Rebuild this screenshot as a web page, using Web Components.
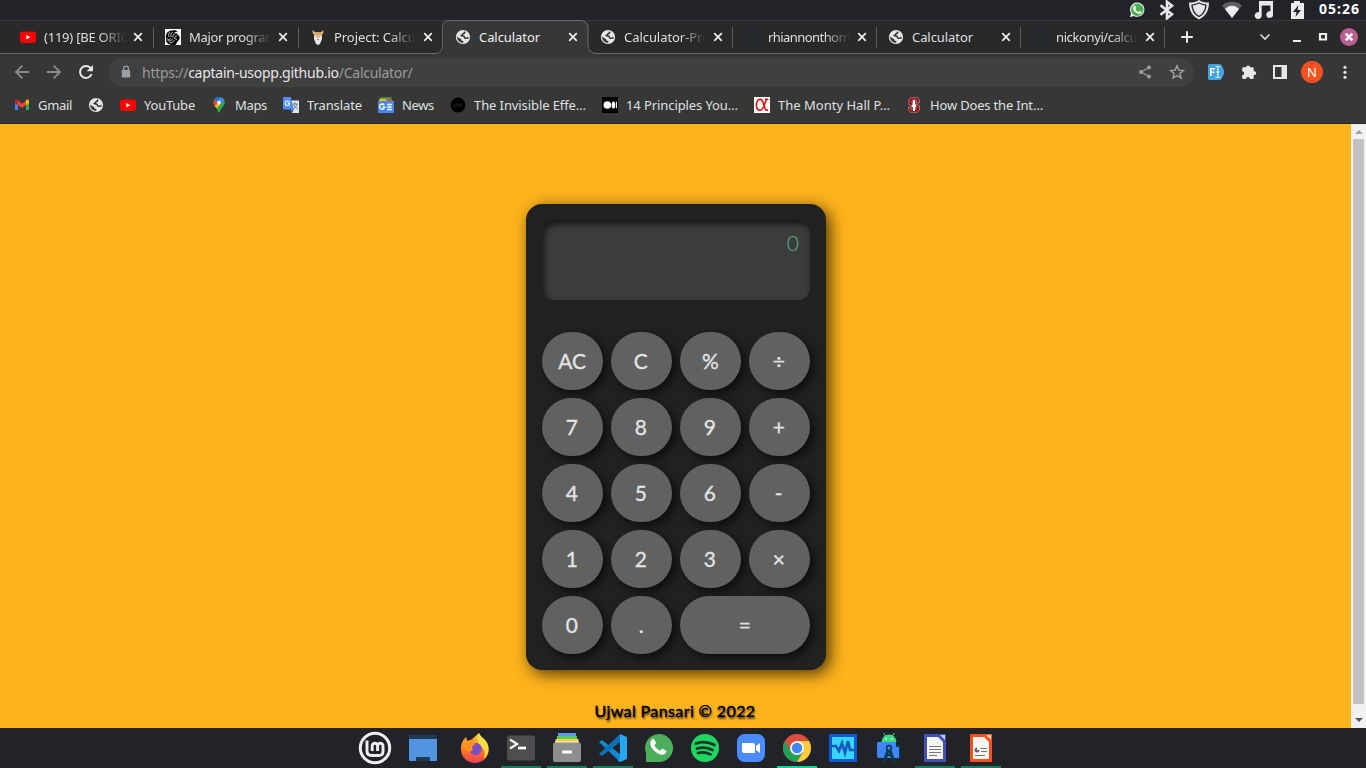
<!DOCTYPE html>
<html lang="en">
<head>
<meta charset="utf-8">
<title>Calculator</title>
<style>
html,body{margin:0;height:100%;overflow:hidden;background:#222329}
body{font-family:"Noto Sans","Open Sans",sans-serif}
</style>
</head>
<body>
<desk-top></desk-top>
<script>
const globe='<circle cx="8" cy="8" r="7.100" fill="#e4e5e7"/><path d="M9.800 2.600L9.600 4 8 4.600 7.600 6 5.900 6.600 9 7.300 9.900 9.200 12.800 9.100 13.300 8.200" stroke="#333" stroke-width="1.500" fill="none" stroke-linejoin="round"/><path d="M1.900 7.400L5.300 9.800 6.300 10.200 6.300 11.400 8.300 12V13.800C4.500 13.800 2.200 11 2.200 8.200z" fill="#333"/>';
const tube='<rect y="2.500" width="16" height="11.500" rx="3" fill="#f00"/><path fill="#fff" d="M6.300 5.900v4.600l4-2.300z"/>';
const octo='<path fill="#232c36" d="M8 .2a8 8 0 0 0-2.500 15.500c.4.100.5-.2.500-.4v-1.500c-2 .4-2.600-.6-2.800-1.100-.2-.4-.6-1-1-1.200-.3-.2-.7-.6 0-.6s1.100.6 1.300.8c.7 1.200 1.900.9 2.400.7.1-.5.300-.9.500-1.100-1.800-.2-3.600-.9-3.600-3.900 0-.9.300-1.600.8-2.100-.1-.3-.4-1.100.1-2.200 0 0 .7-.2 2.200.8a7.500 7.500 0 0 1 4 0c1.500-1 2.200-.8 2.200-.8.500 1.100.2 1.900.1 2.200.5.500.8 1.200.8 2.100 0 3-1.900 3.700-3.600 3.900.3.200.5.700.5 1.400v2.600c0 .2.200.5.600.4A8 8 0 0 0 8 .2Z"/>';
const phone='M6.300 5.100c.5-.4 1-.3 1.300.3l.7 1.500c.2.500-.5 1.200-.8 1.500.7 1.400 1.700 2.300 3.200 2.900.4-.4.900-1.100 1.300-1l1.700.9c.5.300.3 1.300-.4 1.800-1.200.9-3.100.5-5.400-1.300-2.500-2-3.500-5.100-1.600-6.600Z';
const ICONS={
globe:[16,globe],tube:[16,tube],octo:[16,octo],
ucf:[16,'<path fill="#fff" d="M0 0h16v16H0z"/><path d="M1 9C0 4 4 1 8 1.500c2-.5 4 0 5 1.500-2-.5-3 0-4 .5 2 0 3 1 4 2.500 2 1 2 3 1 5l-2 2-1 2.500c-2 1-5 1-6 0-2 0-3-2-4-3.500z"/><path stroke="#fff" stroke-width=".8" fill="none" d="M1.500 9c1 2 3 2 4.500 0M2.500 11.500c2 1 4 .5 5-1.500m-3 4c2 0 4-1 5-3M5 3C3.500 4.500 3.500 6 4 8m4-5C6 4 5.500 6 6 8m4.500-3.500C8.500 5 7.500 6.500 8 8.500m4-1.500c-2 0-2.500 1-2.500 2.500l2.500 1"/>'],
odin:[16,'<path d="M4 5h8v5l-2 5-2 1-2-1-2-5z" fill="#e8e5e2"/><path d="M4 7C4 3 6 3 8 3s4 0 4 4l-2-1H6z" fill="#d9a25c"/><path d="M4.500 6C2.500 5 2 3 3 .5c0 2 2 2 3 3zM11.500 6c2-1 2.500-3 1.500-5.500 0 2-2 2-3 3z" fill="#e9b06a"/><path d="M5.500 6.500h5L9.500 8.500h-3z" fill="#d8a48a"/><path d="M7 10.500h2" stroke="#999"/>'],
close:[16,'<path d="M4.200 4.200l7.600 7.600m0-7.600l-7.600 7.600" stroke="#eceded" stroke-width="1.700"/>'],
plus:[16,'<path d="M8 2.200v11.600M2.200 8h11.600" stroke="#eee" stroke-width="1.900"/>'],
chev:[16,'<path d="M3.500 5.500L8 10l4.500-4.500" stroke="#ddd" stroke-width="1.600" fill="none"/>'],
min:[16,'<path d="M4 11h8" stroke="#eee" stroke-width="2"/>'],
max:[16,'<path d="M5 5h6v5.500H5z" stroke="#eee" stroke-width="2.200" fill="none"/>'],
x:[20,'<circle cx="10" cy="10" r="9" fill="#bb5f92"/><path d="M6.700 6.700l6.600 6.600m0-6.600l-6.600 6.600" stroke="#fff" stroke-width="2.500"/>'],
back:[16,'<path d="M15 8H2m6.400-6.400L2 8l6.400 6.400" stroke="#8a8b8d" stroke-width="1.800" fill="none"/>'],
fwd:[16,'<path d="M1 8h13M7.600 1.600L14 8l-6.400 6.400" stroke="#8a8b8d" stroke-width="1.800" fill="none"/>'],
reload:[16,'<path d="M13.600 10.200A6 6 0 1 1 12.600 4" stroke="#e4e5e7" stroke-width="2" fill="none"/><path d="M15 .9v6.300H8.700z" fill="#e4e5e7"/>'],
lock:[16,'<rect x="3.800" y="6" width="8.400" height="7.600" rx="1" fill="#9aa0a6"/><path d="M5.600 7V4.600a2.400 2.400 0 0 1 4.800 0V7" stroke="#9aa0a6" stroke-width="1.300" fill="none"/>'],
share:[16,'<g fill="#9c9c9c"><circle cx="12" cy="3.500" r="2"/><circle cx="4" cy="8" r="2.100"/><circle cx="12" cy="12.500" r="2"/></g><path d="M12 3.500L4 8l8 4.500" stroke="#9c9c9c" stroke-width="1.300" fill="none"/>'],
star:[16,'<path d="M8 1.900l1.800 4.200 4.600.4-3.500 3 1.100 4.500-4-2.400L4 14l1.100-4.500-3.500-3 4.600-.4z" stroke="#a2a3a5" stroke-width="1.400" fill="none"/>'],
fi:[16,'<path d="M0 1.500Q0 0 1.500 0H11q2 0 2.700 1.500L16 6.500v3l-2.300 5Q13 16 11 16H1.500Q0 16 0 14.500z" fill="#41a4e0"/><path d="M2.800 12v-7.200h4.200M2.800 8.300h3.800" stroke="#fff" stroke-width="1.600" fill="none"/><path d="M7.500 2.600h1.400l1 .8v9.200l-1 .8H7.500M12.300 2.600h-1.400l-1 .8m0 9.200l1 .8h1.400M8.300 8h3" stroke="#fff" stroke-width="1" fill="none"/>'],
puzzle:[16,'<path fill="#e6e7e8" d="M5.200 3.300a1.900 1.900 0 0 1 3.800 0h2.500q1.200 0 1.200 1.200V7.200h.7a1.850 1.850 0 0 1 0 3.700h-.7v2.800q0 1.200-1.200 1.200H9a2 2 0 0 0-4 0H2.400q-1.200 0-1.200-1.200v-2.500a2 2 0 0 0 0-4V4.500q0-1.200 1.200-1.200z"/>'],
side:[16,'<path fill="#e6e7e8" fill-rule="evenodd" d="M1 1h14v14H1zM3 3v10h6.500V3z"/>'],
dots:[16,'<g fill="#e2e3e5"><circle cx="8" cy="3.300" r="1.600"/><circle cx="8" cy="8.300" r="1.600"/><circle cx="8" cy="13.300" r="1.600"/></g>'],
gmail:[16,'<path fill="#4285f4" d="M1 4v9h3V7z"/><path fill="#34a853" d="M12 7v6h3V4z"/><path fill="#ea4335" d="M4 3.500l4 3.300 4-3.300v4.600l-4 3-4-3z"/><path fill="#c5221f" d="M1 4.300C1 2.600 3 2 4 3.200V8.200L1 6z"/><path fill="#fbbc04" d="M15 4.300C15 2.600 13 2 12 3.200V8.200L15 6z"/>'],
maps:[16,'<clipPath id="m"><path d="M8 0a5.500 5.500 0 0 0-5.500 5.500c0 4 4 5 4.700 9.300.2 1 1.400 1 1.600 0 .7-4.300 4.700-5.300 4.700-9.300A5.500 5.500 0 0 0 8 0Z"/></clipPath><g clip-path="url(#m)"><path fill="#34a853" d="M0 0h16v16H0z"/><path fill="#fbbc04" d="M1 11L10 1l5-1-9 11-3 3z"/><path fill="#4285f4" d="M6 5l5-6 6 4-8 4z"/><path fill="#1a73e8" d="M3 3l3-3h4L6 5z"/><path fill="#ea4335" d="M0 3h4l3 3-4 4-3-1z"/><path fill="#34a853" d="M14 3v7l-5 6H6V12z"/></g><circle cx="8" cy="5.500" r="2" fill="#e9edf4"/>'],
translate:[16,'<path fill="#e4e5e7" d="M6 3.500h10V16H9z"/><path fill="#4f8df7" d="M1 0h6.800L11 12.500H1q-1 0-1-1V1q0-1 1-1z"/><path fill="#2f62c8" d="M7 12.500h4L9 16z"/><path d="M6.400 5A2.300 2.300 0 1 0 6.500 7.300V6.400H4.700" stroke="#fff" fill="none" stroke-width="1.100"/><path d="M9.800 7h5M12 5.500V7m2 0c-.5 2.500-1.700 3.800-3.500 5m.3-4.500c.6 1.800 2 3.500 3.700 4.500" stroke="#6b7b88" fill="none"/>'],
news:[16,'<path fill="#34a853" d="M2.500.3h11V3h-11z"/><path fill="#ea4335" d="M7 1.700l7.500 1V5H7z"/><path fill="#fbbc04" d="M1.200 1.700l6 .3L10 5H1.200z"/><path fill="#4688f4" d="M0 4h16V15q0 1-1 1H1q-1 0-1-1z"/><path d="M6.300 8A2.600 2.600 0 1 0 6.800 10H4.500M9 7.500h5M9 10h4.500M9 12.500h5" stroke="#fff" stroke-width="1.300" fill="none"/>'],
dark:[16,'<circle cx="8" cy="8" r="7.400" fill="#000"/><path d="M3 10h3V6.500m2 3.500V6.500l1.500 2 1.500-2V10" fill="none" stroke="#2e2e2e" stroke-width=".8"/>'],
medium:[16,'<path d="M0 0h16v16H0z"/><circle cx="5.300" cy="8" r="3.800" fill="#fff"/><ellipse cx="11.400" cy="8" rx="1.800" ry="3.600" fill="#fff"/><path d="M14.400 4.800v6.400" stroke="#fff" stroke-width="1.100"/>'],
alpha:[16,'<path fill="#fff" d="M0 0h16v16H0z"/><path d="M12.800 2.200c-1.500 2-2.500 9.300-6.200 11-2.700.8-4.200-1.700-4.200-5 0-3.500 1.500-6 4-5.800 3.800.3 3.600 10.500 6 10.900.8 0 1.300-.3 1.600-.8M10.800 2.300h3.600" fill="none" stroke="#e01010" stroke-width="1.600"/>'],
stan:[16,'<path d="M4.500.7h7L13.500 3v3h-3V3.500H6V6l7.500 2.500V13l-2 2.300H4.500l-2-2.300v-3h2.500v2.500h5V10L2.800 7.500V3z" fill="#a00f15" stroke="#c28d8d" stroke-width=".7"/><path d="M8 1.800l1.400 4.200-.3.500 1.600 3.500H9V14H7v-4H5.300L6.900 6.500 6.600 6z" fill="#fff"/>'],
twa:[16,'<path d="M1 15.200l1-3.900A7.200 7.200 0 1 1 4.800 14z" fill="#f0f0f0"/><circle cx="8.200" cy="7.800" r="6.200" fill="#4caf50"/><path transform="translate(-1.300 -1.400)" fill="#fff" d="'+phone+'"/>'],
bt:[20,'<path d="M3.500 5.200l11.500 9L10 18.200V1.800l5 4-11.500 9" stroke="#e8e8e8" stroke-width="2.600" fill="none"/>'],
shield:[20,'<path d="M10 0c3 2 6 2.700 10 2.600-.2 8-3 13.500-10 17C3 16.100.2 10.600 0 2.600 4 2.700 7 2 10 0Z" fill="#e5e5e5"/><path d="M10 2.200c2.600 1.400 5 2 7.700 2.200-.4 6-2.900 10.200-7.700 12.900-4.800-2.700-7.300-6.900-7.700-12.900C5 4.200 7.400 3.600 10 2.200Z" fill="#24252b"/><path d="M10 3.600c2.100 1.200 4.200 1.700 6.300 1.900-.5 4.800-2.500 8-6.300 10.300C6.200 13.500 4.200 10.300 3.700 5.500 5.800 5.300 7.900 4.800 10 3.600Z" fill="#e5e5e5"/>'],
wifi:[20,'<path d="M10 18L0 5.500C6 .6 14 .6 20 5.500z" fill="#606167"/><path d="M10 18L3 9c4-4.500 10-4.500 14 0z" fill="#eee"/>'],
music:[20,'<path fill="#e8e8e8" d="M5 1h14v13.500a3.300 3.300 0 1 1-2.600-3.200V5.500H7.700V15.500A3.500 3.500 0 1 1 5 12.200z"/>'],
bat:[20,'<path d="M7 1h6v2h4v16H4V3h3z" fill="#ececec"/><path d="M11.500 5L6 12h3.500L8.500 17l5.500-7h-3.500z" fill="#222329"/>'],
mint:[34,'<circle cx="17" cy="17" r="14.700" fill="none" stroke="#eeeff0" stroke-width="3"/><path d="M9 9.500V20q0 4.500 4.500 4.500h7.500q4 0 4-4V15a2.700 2.700 0 0 0-5.400 0v5M19.600 20v-5a2.700 2.700 0 0 0-5.400 0v5" fill="none" stroke="#eeeff0" stroke-width="2.900"/>'],
desk:[28,'<rect y="1" width="28" height="26" rx="1" fill="#5294e2"/><path d="M0 5V2q0-1 1-1h26q1 0 1 1v3zM7 27v-3q0-1 1-1h12q1 0 1 1v3z" fill="#1e3954"/>'],
fox:[30,'<defs><linearGradient id="f" x2="0" y2="1"><stop stop-color="#ffd43b"/><stop offset=".55" stop-color="#ff7a22"/><stop offset="1" stop-color="#ef3f55"/></linearGradient></defs><path d="M1 17C.6 11 3 7 6 4l1 4 4-1L19 0c1 3 3 4 5 6 4 4 5 8 4.700 12C28 25 22 30 15 30S1.500 25 1 17Z" fill="url(#f)"/><path d="M6 4l1 4 4-1 3-2v3H3.500z" fill="#ff8a20"/><path d="M19 0c1 3 3 4 5 6 7 7 5 15 0 20 2-8-1-11-4-14-3-4-3-8-1-12Z" fill="#ffdd45"/><path d="M11 7V3.500L8.500 6z" fill="#222329"/><circle cx="15.500" cy="16" r="6.200" fill="#7a4fc4"/><path d="M3 9l7 .5 2-2c0 2 3 2.700 4 3.500-3 1-4 2-4 4 2 1 0 3-2.500 4C5 17 3 13 3 9Z" fill="#ff9020"/>'],
term:[28,'<rect y="1.500" width="28" height="25" rx="2" fill="#4e4e4e"/><path d="M3 5l7 4.500L3 14" transform="translate(0 .5)" fill="none" stroke="#eee" stroke-width="2.400"/><path d="M11 14h8" stroke="#fff" stroke-width="2.700"/>'],
files:[30,'<path fill="#5d9de4" d="M6 0h18v4H6z"/><path fill="#54cb58" d="M5 3h20v4H5z"/><path fill="#ffcf48" d="M3.500 6h23v4h-23z"/><path fill="#f6f0d8" d="M3 8.500h24v2H3z"/><rect y="9.500" x="1" width="28" height="19.500" rx="2" fill="#8e8e8e"/><rect x="10" y="17.500" width="10" height="3" rx="1" fill="#fff"/>'],
code:[30,'<path d="M1 9l3-2 18 14v8z" fill="#1488cf"/><path d="M1 21l3 2L22 9V1z" fill="#0d71b5"/><path d="M22 1l7 3v22l-7 3-2-1.500 2-2V5z" fill="#24a8f2"/>'],
wa:[30,'<path d="M2 29V20A14 14 0 1 1 15 29z" fill="#4cae5b"/><path transform="translate(-3.500 -3.200) scale(1.850)" fill="#fff" d="'+phone+'"/>'],
spot:[30,'<circle cx="15" cy="15" r="14" fill="#1ed760"/><path d="M6 10.500c6-2 13-1.500 18.500 1.500M7 15.500c5-1.500 11-1 15.500 1.500M8 20c4-1 8.500-.8 12.500 1.400" stroke="#20352a" stroke-width="2.700" stroke-linecap="round" fill="none"/>'],
zoom:[30,'<rect x="1" y="1" width="28" height="28" rx="7.500" fill="#4a8cff"/><path fill="#fff" d="M6 10h11q2 0 2 2v8H8q-2 0-2-2zM20 13l4-3v10l-4-3z"/>'],
chrome:[30,'<circle cx="15" cy="15" r="14" fill="#df4c40"/><path d="M2.900 8A14 14 0 0 0 15 29L21 18.500 9 18z" fill="#21a05a"/><path d="M15 29A14 14 0 0 0 27.100 8H15l6 11z" fill="#fccb3e"/><circle cx="15" cy="15" r="7" fill="#f4f5f6"/><circle cx="15" cy="15" r="5.200" fill="#4285f4"/>'],
wave:[28,'<rect width="28" height="28" rx="1" fill="#1259d5"/><path fill="#34d6ff" d="M3 3h22v22H3z"/><path d="M3 12h4l3 5 3-8 3 10 3-12 2 9h4" fill="none" stroke="#1459b8" stroke-width="2.600"/>'],
droid:[30,'<path d="M7.500 9a7.500 7.500 0 0 1 15 0z" fill="#3ddb84"/><path d="M9.500 0l2 3m9-3l-2 3" stroke="#3ddb84"/><circle cx="12" cy="6" r=".8" fill="#fff"/><circle cx="18" cy="6" r=".8" fill="#fff"/><path d="M22 12h4.500v14H20z" fill="#073b50"/><path d="M4 9h18v5h3v11H5q-2 0-2-2V10q0-1 1-1z" fill="#4285f4"/><path d="M14.500 16L10 29m5.500-13L20 29" stroke="#073b50" stroke-width="3"/><circle cx="15" cy="15" r="2.400" fill="#4285f4" stroke="#073b50" stroke-width="1.500"/><path d="M12 23q3-2 6 0" stroke="#073b50" stroke-width="2" fill="none"/>'],
writer:[28,'<path d="M4.500 1.500h19v25h-19z" fill="#f5f5f5" stroke="#3f51b5" stroke-width="3"/><path d="M14 0h11v11z" fill="#3f51b5"/><path d="M19 1l5 5V1z" fill="#c5cae9"/><path d="M8 12.500h12M8 15.500h12M8 18.500h12M8 21.500h8" stroke="#777"/>'],
impress:[28,'<path d="M4.500 1.500h19v25h-19z" fill="#f5f5f5" stroke="#f4511e" stroke-width="3"/><path d="M14 0h11v11z" fill="#f4511e"/><path d="M19 1l5 5V1z" fill="#ffccbc"/><path d="M13.500 14.500H20M14 17.500h6M8 21.500h10" stroke="#777"/><path d="M10 13.500v2.500h2.500a2.500 2.500 0 1 1-2.500-2.500z" fill="#666"/>'],
up:[16,'<path d="M4 10l4-4 4 4z" fill="#a2a2a2"/>'],
down:[16,'<path d="M4 6l4 4 4-4z" fill="#555"/>']
};

class UiIcon extends HTMLElement{
  connectedCallback(){
    const [v,body]=ICONS[this.getAttribute('name')];
    const s=this.getAttribute('size')||v;
    this.attachShadow({mode:'open'}).innerHTML=`<style>:host{display:block;flex:none;width:${s}px;height:${s}px}svg{display:block}</style><svg width="${s}" height="${s}" viewBox="0 0 ${v} ${v}">${body}</svg>`;
  }
}
customElements.define('ui-icon',UiIcon);

/* A label whose tracking is adjusted so that it fills a given width. */
class FitText extends HTMLElement{
  connectedCallback(){
    this.attachShadow({mode:'open'}).innerHTML='<style>:host{display:inline-block;white-space:pre;flex:none}span{display:inline-block}</style><span><slot></slot></span>';
    const w=+this.getAttribute('w'),span=this.shadowRoot.querySelector('span');
    if(!w)return;
    const n=[...this.textContent].length;
    span.style.letterSpacing=((w-span.getBoundingClientRect().width)/n)+'px';
    this.style.width=w+'px';
  }
}
customElements.define('fit-text',FitText);

function define(name,html){
  customElements.define(name,class extends HTMLElement{
    connectedCallback(){
      if(this.shadowRoot)return;
      const t=document.createElement('template');
      t.innerHTML=typeof html==='function'?html(this):html;
      this.attachShadow({mode:'open'}).append(t.content.cloneNode(true));
    }
  });
}

define('system-panel',`<style>
:host{display:flex;height:20px;box-sizing:border-box;background:#222329;align-items:center;justify-content:flex-end;padding-right:6px;color:#fff}
.tray{display:grid;grid-template-columns:16px 20px 20px 20px 20px 20px;column-gap:13px;align-items:center;margin-right:12px}
.tray>:first-child{margin-left:3px;margin-right:-3px}
.tray>:nth-child(2){margin-left:2px;margin-right:-2px}
.tray>:nth-child(3),.tray>:nth-child(4){margin-left:1px;margin-right:-1px}
b{font:bold 14px/18px "Noto Sans",sans-serif;height:20px;display:block}
</style><div class="tray"><ui-icon name="twa"></ui-icon><ui-icon name="bt"></ui-icon><ui-icon name="shield"></ui-icon><ui-icon name="wifi"></ui-icon><ui-icon name="music"></ui-icon><ui-icon name="bat"></ui-icon></div><b><fit-text w="41">05:26</fit-text></b>`);

define('browser-tab',el=>{
 const a=el.hasAttribute('active');
 return `<style>
:host{display:flex;flex:none;width:${el.getAttribute('width')}px;height:34px;box-sizing:border-box;padding-left:12px;align-items:center;position:relative;color:#dedfe1;font-size:13px}
.t{width:84px;margin-left:8px;overflow:hidden;white-space:nowrap;height:20px;line-height:20px;-webkit-mask-image:linear-gradient(90deg,#000 56px,transparent 82px)}
.t.full{-webkit-mask-image:none}
ui-icon{position:relative}
.sep{position:absolute;right:-1px;top:7px;width:1px;height:21px;background:#5d5d5d}
.bg{position:absolute;left:-8px;top:0}
.x{margin-left:2px}
</style>${a?'<svg class="bg" width="162" height="34"><path d="M0 34V33.500Q8.500 33.500 8.500 25V8Q8.500.5 16 .5H146Q153.500.5 153.500 8V25Q153.500 33.500 162 33.500V34Z" fill="#373737"/><path d="M0 33.500Q7.500 33.500 7.500 25V8Q7.500.5 15 .5H145Q152.500.5 153 8V25Q153.500 33.500 162 33.500" fill="none" stroke="#6a6a6a"/></svg>':''}
<ui-icon name="${el.getAttribute('icon')}"></ui-icon><div class="t ${el.hasAttribute('full')?'full':''}" style="${a?'position:relative;color:#f0f0f0':''}"><slot></slot></div><ui-icon class="x" name="close"></ui-icon>${el.hasAttribute('sep')?'<i class="sep"></i>':''}`});

define('tab-strip',`<style>
:host{display:flex;height:34px;padding-left:8px;background:#292929;box-sizing:border-box;background-image:linear-gradient(#393939,#393939),linear-gradient(#6a6a6a,#6a6a6a);background-size:100% 1px;background-position:0 0,0 100%;background-repeat:no-repeat}
.win{display:flex;align-items:center;height:34px}
</style>
<browser-tab width="145" icon="tube" sep><fit-text w="90">(119) [BE ORIGI</fit-text></browser-tab><browser-tab width="145" icon="ucf" sep><fit-text w="88">Major program</fit-text></browser-tab><browser-tab width="145" icon="odin"><fit-text w="85">Project: Calcul</fit-text></browser-tab><browser-tab width="145" icon="globe" active full><fit-text w="61">Calculator</fit-text></browser-tab><browser-tab width="144" icon="globe" sep><fit-text w="86">Calculator-Pro</fit-text></browser-tab><browser-tab width="144" icon="octo" sep><fit-text w="82">rhiannonthom</fit-text></browser-tab><browser-tab width="144" icon="globe" sep full><fit-text w="61">Calculator</fit-text></browser-tab><browser-tab width="144" icon="octo" sep><fit-text w="84">nickonyi/calcul</fit-text></browser-tab>
<div class="win"><ui-icon name="plus" style="margin-left:15px"></ui-icon><ui-icon name="chev" style="margin-left:62px"></ui-icon><ui-icon name="min" style="margin-left:16px;margin-top:2px"></ui-icon><ui-icon name="max" style="margin-left:10px"></ui-icon><ui-icon name="x" style="margin-left:8px"></ui-icon></div>`);

define('tool-bar',`<style>
:host{display:flex;height:33px;background:#373737;align-items:center;padding:4px 13px 0 14px;box-sizing:border-box}
:host>*{flex:none}
.nav{display:flex;gap:16px;width:94px;padding-bottom:1px}
.url{box-sizing:border-box;display:flex;align-items:center;width:1086px;height:29px;border-radius:15px;background:#404040;padding:0 9px 1px 10px;color:#9b9b9b;font:14px/27px "Noto Sans",sans-serif}
.url b{font-weight:400;color:#e6e6e6}
.ext{display:flex;align-items:center;padding-bottom:1px}
.grow{flex:1}
.av{width:22px;height:22px;border-radius:50%;background:#f4511e;color:#fff;font:13px/22px "Noto Sans",sans-serif;text-align:center;flex:none}
</style><div class="nav"><ui-icon name="back"></ui-icon><ui-icon name="fwd"></ui-icon><ui-icon name="reload"></ui-icon></div>
<div class="url"><ui-icon name="lock"></ui-icon><fit-text w="270.500" style="margin-left:8px">https://<b>captain-usopp.github.io</b>/Calculator/</fit-text><span class="grow"></span><ui-icon name="share"></ui-icon><ui-icon name="star" style="margin-left:16px"></ui-icon></div>
<div class="ext"><ui-icon name="fi" style="margin-left:14px"></ui-icon><ui-icon name="puzzle" style="margin-left:17px"></ui-icon><ui-icon name="side" style="margin-left:15px"></ui-icon><div class="av" style="margin-left:13px">N</div><ui-icon name="dots" style="margin-left:14px"></ui-icon></div>`);

const marks=[['gmail','Gmail',34],['globe'],['tube','YouTube',51],['maps','Maps',32],['translate','Translate',55],['news','News',32],['dark','The Invisible Effe…',112],['medium','14 Principles You…',112],['alpha','The Monty Hall P…',112],['stan','How Does the Int…',113]];
define('bookmark-bar',`<style>
:host{display:flex;height:37px;background:#373737;border-bottom:1px solid #2a2a2a;box-sizing:border-box;padding-left:14px;gap:16px;color:#dfe0e2;font-size:13px;line-height:20px}
div{display:flex;height:36px;align-items:center;gap:8px}
</style>${marks.map(m=>`<div><ui-icon name="${m[0]}"></ui-icon>${m[1]?`<fit-text w="${m[2]}">${m[1]}</fit-text>`:''}</div>`).join('')}`);

define('calc-key',`<style>
:host{display:flex;align-items:center;justify-content:center;height:58px;border-radius:29px;background:#616161;color:#e3e3e3;box-shadow:4px 4px 8px rgba(0,0,0,.6);font:22px/58px Lato,"Noto Sans",sans-serif;-webkit-text-stroke:.35px #e3e3e3}
span{display:block;transform:translateX(-.5px) scaleX(.95)}
</style><span><slot></slot></span>`);

const keys=['AC','C','%','÷','7','8','9','+','4','5','6','-','1','2','3','×','0','.','='];
define('calc-body',`<style>
:host{display:block;box-sizing:border-box;width:300px;height:466px;padding:16px;border-radius:16px;background:#212121;box-shadow:4px 4px 16px rgba(0,0,0,.7)}
.screen{height:80px;box-sizing:border-box;border-radius:12px;background:#3c3c3c;box-shadow:inset 2px 4px 6px rgba(0,0,0,.65);padding:8px 11px;text-align:right;color:#57a481;font:300 21px/30px Lato,sans-serif;-webkit-text-stroke:.2px #57a481}
.keys{display:grid;grid-template-columns:repeat(4,61px);gap:8px;margin-top:32px}
calc-key:last-child{grid-column:span 2}
</style><div class="screen">0</div><div class="keys">${keys.map(k=>`<calc-key>${k}</calc-key>`).join('')}</div>`);

define('web-page',`<style>
:host{display:flex;height:604px;background:#fdb31c}
main{width:1351px;display:flex;flex-direction:column;align-items:center;padding:80px 0 0 1px;box-sizing:border-box;overflow:hidden}
footer{margin:29px 2px 0 0;font:16px/24px Lato,sans-serif;color:#000;-webkit-text-stroke:.5px #000;text-shadow:1px 2px 2px rgba(0,0,0,.7)}
.bar{width:15px;background:#f1f1f1;display:flex;flex-direction:column;align-items:center;overflow:hidden}
.thumb{width:11px;height:565px;background:#c1c1c1}
.bar ui-icon{margin-bottom:-1px}
</style><main><calc-body></calc-body><footer><fit-text w="161">Ujwal Pansari © 2022</fit-text></footer></main><div class="bar"><ui-icon name="up"></ui-icon><div class="thumb"></div><ui-icon name="down" style="margin-top:8px"></ui-icon></div>`);

const apps=[['fox'],['term',1],['files',1],['code',1],['wa'],['spot'],['zoom'],['chrome',2],['wave'],['droid'],['writer',1],['impress',1]];
define('task-bar',`<style>
:host{display:flex;height:40px;background:#222329;padding-left:355px;box-sizing:border-box;overflow:hidden}
div{width:40px;height:40px;box-sizing:border-box;display:flex;align-items:center;justify-content:center;border-bottom:2px solid transparent;margin-right:6px;padding-top:2px}
.r{border-color:#197a60}.a{border-color:#11d394}
</style><div style="margin-right:8px"><ui-icon name="mint"></ui-icon></div><div style="margin-right:12px"><ui-icon name="desk"></ui-icon></div>${apps.map(a=>`<div class="${['','r','a'][a[1]||0]}"><ui-icon name="${a[0]}"></ui-icon></div>`).join('')}`);

define('desk-top',`<style>:host{display:block;width:1366px;height:768px;overflow:hidden}</style><system-panel></system-panel><tab-strip></tab-strip><tool-bar></tool-bar><bookmark-bar></bookmark-bar><web-page></web-page><task-bar></task-bar>`);
</script>
</body>
</html>
